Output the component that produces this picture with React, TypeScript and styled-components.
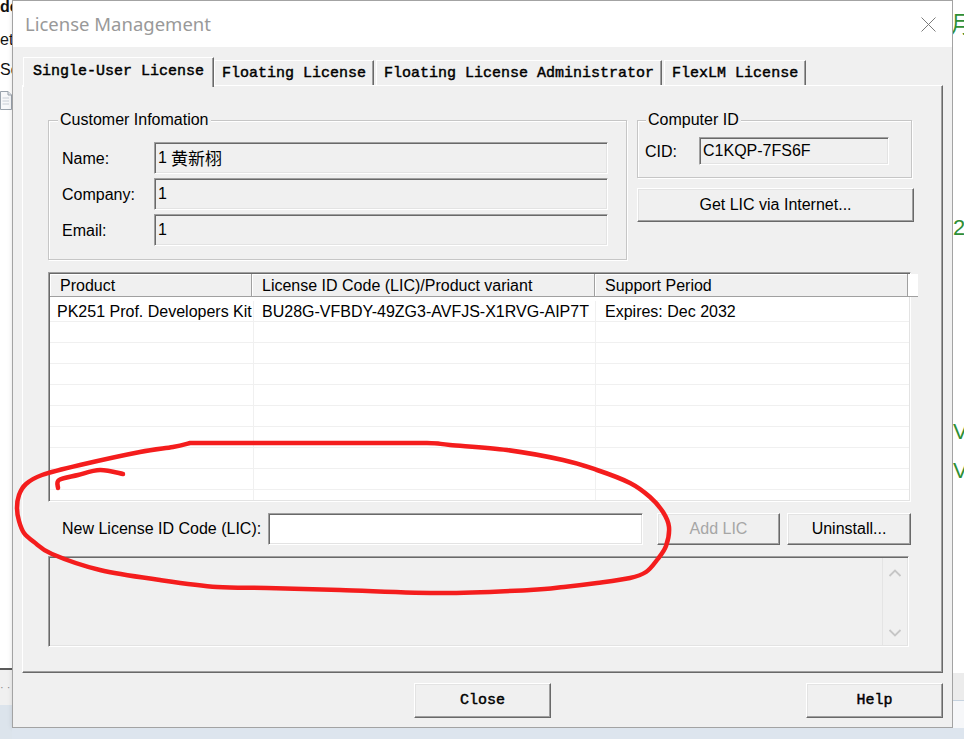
import React from "react";
import styled, { createGlobalStyle, css } from "styled-components";

const UI_FONT = `"Liberation Sans", Arial, "Noto Sans CJK SC", sans-serif`;
const MONO_FONT = `"Liberation Mono", "Courier New", monospace`;

const GlobalStyle = createGlobalStyle`
  html, body { margin: 0; padding: 0; }
  body { width: 964px; height: 739px; overflow: hidden; background: #fff; }
  #root { width: 964px; height: 739px; }
`;

const Page = styled.div`
  position: relative;
  width: 964px;
  height: 739px;
  display: grid;
  grid-template-columns: 12px 941px 11px;
  grid-template-rows: 728px 11px;
  overflow: hidden;
  font-family: ${UI_FONT};
`;

/* ---------- background windows ---------- */
const LeftStrip = styled.div`
  grid-column: 1;
  grid-row: 1 / span 2;
  display: flex;
  flex-direction: column;
  overflow: hidden;
  background: #fff;
`;
const StripTop = styled.div`
  flex: 0 0 668px;
  display: flex;
  flex-direction: column;
  overflow: hidden;
`;
const StripText = styled.div<{ $mt: number; $bold?: boolean }>`
  margin-top: ${(p) => p.$mt}px;
  height: 20px;
  line-height: 20px;
  font-size: 16px;
  font-weight: ${(p) => (p.$bold ? 700 : 400)};
  color: #111;
  white-space: nowrap;
`;
const StripIcon = styled.svg`
  margin-top: 10px;
  flex: 0 0 auto;
`;
const StripRule = styled.div`
  flex: 0 0 2px;
  background: #5a5a5a;
`;
const StripGray = styled.div`
  flex: 0 0 35px;
  background: #f0f0f0;
  color: #8a8a8a;
  font-size: 11px;
  line-height: 35px;
  white-space: nowrap;
`;
const StripBlue = styled.div`
  flex: 1;
  background: #dce4ec;
`;

const RightStrip = styled.div`
  grid-column: 3;
  grid-row: 1;
  display: flex;
  flex-direction: column;
  overflow: hidden;
  background: #fff;
`;
const GreenGlyph = styled.div<{ $mt: number; $cjk?: boolean }>`
  margin-top: ${(p) => p.$mt}px;
  height: 26px;
  line-height: 26px;
  font-size: ${(p) => (p.$cjk ? 24 : 22)}px;
  font-family: ${(p) => (p.$cjk ? `"Noto Sans CJK SC", sans-serif` : UI_FONT)};
  color: #2f8f35;
  white-space: nowrap;
  margin-left: ${(p) => (p.$cjk ? -3 : 0)}px;
`;
const RightSpacer = styled.div`
  flex: 1;
`;
const RightGray = styled.div`
  flex: 0 0 27px;
  background: #ececec;
`;
const RightLine = styled.div`
  flex: 0 0 1px;
  background: #c6d3e0;
`;
const RightLight = styled.div`
  flex: 0 0 27px;
  background: #f6f7f9;
`;

const BottomStrip = styled.div`
  grid-column: 2 / span 2;
  grid-row: 2;
  background: #dde5ee;
`;

/* ---------- dialog ---------- */
const Dialog = styled.div`
  grid-column: 2;
  grid-row: 1;
  box-sizing: border-box;
  display: flex;
  flex-direction: column;
  border: 1px solid #a3a3a3;
  background: #f0f0f0;
  box-shadow: 0 0 5px rgba(0, 0, 0, 0.12);
`;

const TitleBar = styled.div`
  flex: 0 0 46px;
  display: flex;
  align-items: center;
  justify-content: space-between;
  padding: 0 16px 0 12px;
  background: #fff;
`;
const Title = styled.div`
  font-family: "Noto Sans", "Open Sans", sans-serif;
  font-size: 18.5px;
  color: #999;
  padding-bottom: 1px;
`;

const Body = styled.div`
  flex: 1;
  display: flex;
  flex-direction: column;
  padding: 10px 9px 9px 9px;
`;

const TabRow = styled.div`
  display: flex;
  align-items: flex-end;
  gap: 2px;
  height: 28px;
  padding-left: 3px;
  position: relative;
  z-index: 2;
`;
const Tab = styled.div<{ $active?: boolean }>`
  box-sizing: border-box;
  height: 25px;
  padding: 0 7px;
  display: flex;
  align-items: center;
  font-family: ${MONO_FONT};
  font-weight: 400;
  -webkit-text-stroke: 0.45px #000;
  font-size: 15px;
  color: #000;
  background: #f0f0f0;
  border-top: 1px solid #fff;
  border-left: 1px solid #fff;
  border-right: 1px solid #696969;
  box-shadow: inset -1px 0 0 #a0a0a0;
  white-space: nowrap;
  ${(p) =>
    p.$active &&
    css`
      height: 30px;
      margin: 0 -2px -2px;
      padding: 0 9px 2px;
      position: relative;
      z-index: 3;
    `}
`;

const Panel = styled.div`
  box-sizing: border-box;
  display: flex;
  flex-direction: column;
  border: 1px solid;
  border-color: #fff #696969 #696969 #fff;
  box-shadow: inset -1px -1px 0 #a0a0a0;
  padding: 25px 28px 25px 25px;
`;

const TopGrid = styled.div`
  display: grid;
  grid-template-columns: 579px 277px;
  column-gap: 10px;
  align-items: start;
`;

const GroupBox = styled.fieldset<{ $pad: string; $w?: number }>`
  box-sizing: border-box;
  margin: 0;
  min-width: 0;
  width: ${(p) => (p.$w ? `${p.$w}px` : "auto")};
  padding: ${(p) => p.$pad};
  border: 1px solid #c6c6c6;
  box-shadow: inset 1px 1px 0 #fff, 1px 1px 0 #fff;
`;
const Legend = styled.legend<{ $indent: number }>`
  margin-left: ${(p) => p.$indent}px;
  padding: 0 2px;
  font-size: 16px;
  line-height: 18px;
  color: #000;
  background: #f0f0f0;
`;

const FieldGrid = styled.div<{ $cols: string }>`
  display: grid;
  grid-template-columns: ${(p) => p.$cols};
  row-gap: 4px;
  align-items: center;
`;
const Label = styled.div`
  font-size: 16px;
  color: #000;
  white-space: nowrap;
  padding-top: 2px;
`;
const Sunken = styled.div<{ $h: number; $white?: boolean }>`
  box-sizing: border-box;
  height: ${(p) => p.$h}px;
  display: flex;
  align-items: center;
  padding: 0 4px 1px 3px;
  border: 1px solid;
  border-color: #a0a0a0 #fff #fff #a0a0a0;
  box-shadow: inset 1px 1px 0 #696969, inset -1px -1px 0 #e3e3e3;
  background: ${(p) => (p.$white ? "#fff" : "#f0f0f0")};
  font-size: 16px;
  color: #000;
  white-space: nowrap;
`;
const Cjk = styled.span`
  font-family: "Noto Sans CJK SC", sans-serif;
  font-size: 17px;
  margin-left: 4px;
`;

const RightCol = styled.div`
  display: flex;
  flex-direction: column;
  gap: 10px;
`;

const WinButton = styled.button<{ $w: number; $h: number; $mono?: boolean }>`
  box-sizing: border-box;
  width: ${(p) => p.$w}px;
  height: ${(p) => p.$h}px;
  margin: 0;
  padding: 0;
  display: flex;
  align-items: center;
  justify-content: center;
  border: 1px solid;
  border-color: #fff #696969 #696969 #fff;
  box-shadow: inset -1px -1px 0 #a0a0a0, inset 1px 1px 0 #e3e3e3;
  background: #f0f0f0;
  color: #000;
  font-family: ${(p) => (p.$mono ? MONO_FONT : UI_FONT)};
  font-weight: 400;
  -webkit-text-stroke: ${(p) => (p.$mono ? "0.45px #000" : "0")};
  font-size: ${(p) => (p.$mono ? 15 : 16)}px;
  &:disabled {
    color: #a6a6a6;
  }
`;

const ListView = styled.div`
  box-sizing: border-box;
  margin-top: 12px;
  width: 863px;
  height: 230px;
  padding: 1px;
  display: flex;
  flex-direction: column;
  border: 1px solid;
  border-color: #a0a0a0 #fff #fff #a0a0a0;
  box-shadow: inset 1px 1px 0 #696969, inset -1px -1px 0 #e3e3e3;
  background: #fff;
`;
const HeaderRow = styled.div`
  display: grid;
  grid-template-columns: 202px 343px 313px 1fr;
  height: 23px;
  flex: 0 0 23px;
`;
const HeaderCell = styled.div<{ $filler?: boolean }>`
  box-sizing: border-box;
  display: flex;
  align-items: center;
  padding: 2px 0 0 10px;
  background: ${(p) => (p.$filler ? "#fff" : "#f0f0f0")};
  border-right: ${(p) => (p.$filler ? "none" : "1px solid #a0a0a0")};
  border-bottom: 1px solid #a0a0a0;
  box-shadow: ${(p) => (p.$filler ? "none" : "inset 1px 1px 0 #fff")};
  font-size: 16px;
  color: #000;
  white-space: nowrap;
`;
const Rows = styled.div`
  flex: 1;
  overflow: hidden;
  padding-top: 4px;
`;
const Row = styled.div`
  box-sizing: border-box;
  display: grid;
  grid-template-columns: 204px 342px 1fr;
  height: 21px;
  border-bottom: 1px solid #f0f0f0;
`;
const Cell = styled.div<{ $pad: number; $last?: boolean }>`
  padding: 1px 0 0 ${(p) => p.$pad}px;
  border-right: ${(p) => (p.$last ? "none" : "1px solid #f0f0f0")};
  font-size: 16px;
  line-height: 20px;
  color: #000;
  white-space: nowrap;
`;

const LicRow = styled.div`
  display: flex;
  align-items: center;
  margin-top: 11px;
  height: 32px;
`;
const LicLabel = styled.div`
  width: 206px;
  padding-left: 14px;
  font-size: 16px;
  color: #000;
  white-space: nowrap;
`;
const LicInput = styled(Sunken)`
  width: 375px;
`;
const Spaced = styled.div<{ $ml: number }>`
  margin-left: ${(p) => p.$ml}px;
`;

const OutputBox = styled.div`
  box-sizing: border-box;
  margin-top: 11px;
  width: 861px;
  height: 91px;
  padding: 1px;
  display: flex;
  justify-content: flex-end;
  border: 1px solid;
  border-color: #a0a0a0 #fff #fff #a0a0a0;
  box-shadow: inset 1px 1px 0 #696969, inset -1px -1px 0 #e3e3e3;
  background: #f0f0f0;
`;
const ScrollBar = styled.div`
  width: 24px;
  display: flex;
  flex-direction: column;
  justify-content: space-between;
  align-items: center;
  padding: 11px 0 8px;
  border-left: 1px solid #e4e4e4;
  background: #f0f0f0;
`;

const Footer = styled.div`
  display: grid;
  grid-template-columns: 1fr 137px 1fr;
  margin-top: 10px;
`;
const FooterRight = styled.div`
  justify-self: end;
`;

const Annotation = styled.svg`
  position: absolute;
  left: 0;
  top: 0;
  pointer-events: none;
  z-index: 10;
`;

/* ---------- data ---------- */
const tabs = ["Single-User License", "Floating License", "Floating License Administrator", "FlexLM License"];

const ellipsePts: number[][] = [
  [190, 443], [173, 447], [140, 452], [80, 465], [42, 475], [26, 484], [19, 495], [17, 508],
  [19, 521], [24, 533], [34, 542], [52, 554], [100, 570], [160, 580], [217, 587], [267, 588],
  [340, 590], [443, 593], [530, 590], [564, 587], [597, 583], [630, 578], [646, 572], [657, 560],
  [666, 546], [669, 527], [663, 512], [650, 497], [630, 483], [597, 470], [563, 460], [507, 450],
  [450, 445], [427, 443], [360, 443], [260, 443], [190, 443],
];
const hookPts: number[][] = [[58, 488], [59, 480], [78, 475], [100, 470], [123, 474]];

function smoothPath(pts: number[][]): string {
  let d = `M${pts[0][0]} ${pts[0][1]}`;
  for (let i = 0; i < pts.length - 1; i++) {
    const p0 = pts[i - 1] || pts[i];
    const p1 = pts[i];
    const p2 = pts[i + 1];
    const p3 = pts[i + 2] || p2;
    const c1x = p1[0] + (p2[0] - p0[0]) / 6;
    const c1y = p1[1] + (p2[1] - p0[1]) / 6;
    const c2x = p2[0] - (p3[0] - p1[0]) / 6;
    const c2y = p2[1] - (p3[1] - p1[1]) / 6;
    d += ` C${c1x.toFixed(1)} ${c1y.toFixed(1)} ${c2x.toFixed(1)} ${c2y.toFixed(1)} ${p2[0]} ${p2[1]}`;
  }
  return d;
}

const Chevron: React.FC<{ up?: boolean }> = ({ up }) => (
  <svg width="14" height="8" viewBox="0 0 14 8">
    <path
      d={up ? "M1.5 7 L7 1.5 L12.5 7" : "M1.5 1 L7 6.5 L12.5 1"}
      fill="none"
      stroke="#c6c6c6"
      strokeWidth="1.8"
    />
  </svg>
);

export default function App() {
  return (
    <Page>
      <GlobalStyle />

      <LeftStrip>
        <StripTop>
          <StripText $mt={-3} $bold>
            de
          </StripText>
          <StripText $mt={13}>et</StripText>
          <StripText $mt={10}>So</StripText>
          <StripIcon width="12" height="20" viewBox="0 0 12 20">
            <path d="M0.5 1.5 H8 L11.5 5 V19.5 H0.5 Z" fill="#f7f8fa" stroke="#9aa3ad" />
            <path d="M8 1.5 V5 H11.5" fill="#e3e7ec" stroke="#9aa3ad" />
            <path d="M2.5 8 H9 M2.5 11 H9 M2.5 14 H9" stroke="#c8ced6" />
          </StripIcon>
        </StripTop>
        <StripRule />
        <StripGray>· · ·</StripGray>
        <StripBlue />
      </LeftStrip>

      <Dialog>
        <TitleBar>
          <Title>License Management</Title>
          <svg width="15" height="15" viewBox="0 0 15 15">
            <path d="M0.5 0.5 L14.5 14.5 M14.5 0.5 L0.5 14.5" stroke="#7a7a7a" strokeWidth="1" />
          </svg>
        </TitleBar>

        <Body>
          <TabRow>
            {tabs.map((t, i) => (
              <Tab key={t} $active={i === 0}>
                {t}
              </Tab>
            ))}
          </TabRow>

          <Panel>
            <TopGrid>
              <GroupBox $pad="13px 18px 13px 13px">
                <Legend $indent={-4}>Customer Infomation</Legend>
                <FieldGrid $cols="92px 454px">
                  <Label>Name:</Label>
                  <Sunken $h={32}>
                    1<Cjk>黄新栩</Cjk>
                  </Sunken>
                  <Label>Company:</Label>
                  <Sunken $h={32}>1</Sunken>
                  <Label>Email:</Label>
                  <Sunken $h={32}>1</Sunken>
                </FieldGrid>
              </GroupBox>

              <RightCol>
                <GroupBox $pad="8px 22px 12px 7px" $w={275}>
                  <Legend $indent={1}>Computer ID</Legend>
                  <FieldGrid $cols="54px 190px">
                    <Label>CID:</Label>
                    <Sunken $h={28}>C1KQP-7FS6F</Sunken>
                  </FieldGrid>
                </GroupBox>
                <WinButton $w={277} $h={34}>
                  Get LIC via Internet...
                </WinButton>
              </RightCol>
            </TopGrid>

            <ListView>
              <HeaderRow>
                <HeaderCell>Product</HeaderCell>
                <HeaderCell>License ID Code (LIC)/Product variant</HeaderCell>
                <HeaderCell>Support Period</HeaderCell>
                <HeaderCell $filler />
              </HeaderRow>
              <Rows>
                <Row>
                  <Cell $pad={7}>PK251 Prof. Developers Kit</Cell>
                  <Cell $pad={8}>BU28G-VFBDY-49ZG3-AVFJS-X1RVG-AIP7T</Cell>
                  <Cell $pad={9} $last>
                    Expires: Dec 2032
                  </Cell>
                </Row>
                {Array.from({ length: 9 }).map((_, i) => (
                  <Row key={i}>
                    <Cell $pad={7} />
                    <Cell $pad={8} />
                    <Cell $pad={9} $last />
                  </Row>
                ))}
              </Rows>
            </ListView>

            <LicRow>
              <LicLabel>New License ID Code (LIC):</LicLabel>
              <LicInput $h={32} $white />
              <Spaced $ml={14}>
                <WinButton $w={123} $h={32} disabled>
                  Add LIC
                </WinButton>
              </Spaced>
              <Spaced $ml={7}>
                <WinButton $w={124} $h={32}>
                  Uninstall...
                </WinButton>
              </Spaced>
            </LicRow>

            <OutputBox>
              <ScrollBar>
                <Chevron up />
                <Chevron />
              </ScrollBar>
            </OutputBox>
          </Panel>

          <Footer>
            <span />
            <WinButton $w={137} $h={35} $mono>
              Close
            </WinButton>
            <FooterRight>
              <WinButton $w={137} $h={35} $mono>
                Help
              </WinButton>
            </FooterRight>
          </Footer>
        </Body>
      </Dialog>

      <RightStrip>
        <GreenGlyph $mt={10} $cjk>
          月
        </GreenGlyph>
        <GreenGlyph $mt={179}>2</GreenGlyph>
        <GreenGlyph $mt={178}>V</GreenGlyph>
        <GreenGlyph $mt={13}>V</GreenGlyph>
        <RightSpacer />
        <RightGray />
        <RightLine />
        <RightLight />
      </RightStrip>

      <BottomStrip />

      <Annotation width="964" height="739" viewBox="0 0 964 739">
        <path
          d={smoothPath(ellipsePts)}
          fill="none"
          stroke="#f41d1d"
          strokeWidth="4.5"
          strokeLinecap="round"
          strokeLinejoin="round"
        />
        <path
          d={smoothPath(hookPts)}
          fill="none"
          stroke="#f41d1d"
          strokeWidth="4.5"
          strokeLinecap="round"
          strokeLinejoin="round"
        />
      </Annotation>
    </Page>
  );
}
